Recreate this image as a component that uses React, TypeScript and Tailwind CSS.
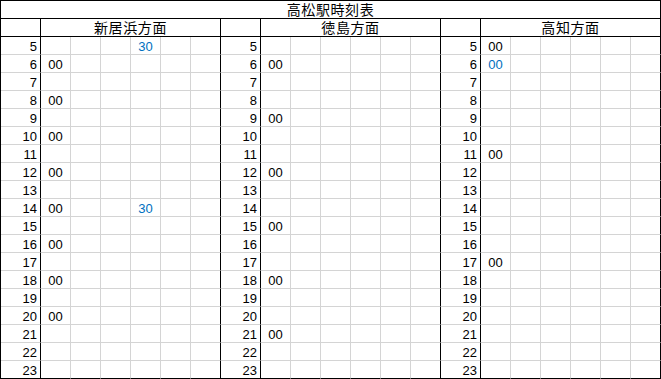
import React from "react";

type Cell = { text: string; blue?: boolean } | null;

interface Section {
    title: string;
    // hour -> six minute slots
    times: Record<number, Cell[]>;
}

const hours = Array.from({ length: 19 }, (_, i) => i + 5);

const oo: Cell = { text: "00" };
const ooBlue: Cell = { text: "00", blue: true };
const thirtyBlue: Cell = { text: "30", blue: true };

const sections: Section[] = [
    {
        title: "新居浜方面",
        times: {
            5: [null, null, null, thirtyBlue],
            6: [oo],
            8: [oo],
            10: [oo],
            12: [oo],
            14: [oo, null, null, thirtyBlue],
            16: [oo],
            18: [oo],
            20: [oo],
        },
    },
    {
        title: "徳島方面",
        times: {
            6: [oo],
            9: [oo],
            12: [oo],
            15: [oo],
            18: [oo],
            21: [oo],
        },
    },
    {
        title: "高知方面",
        times: {
            5: [oo],
            6: [ooBlue],
            11: [oo],
            17: [oo],
        },
    },
];

const font = { fontFamily: '"Liberation Sans", Arial, sans-serif' };
const jpFont = { fontFamily: '"Noto Sans CJK JP", "Liberation Sans", sans-serif' };

const HourCell = ({ hour, last }: { hour: number; last: boolean }) => (
    <div
        className={`h-[18px] border-r border-b border-r-black ${last ? "border-b-black" : "border-b-[#d4d4d4]"} flex items-end justify-end pr-[3px] pb-[1px] text-[13px] leading-[13px] text-black`}
    >
        {hour}
    </div>
);

const MinuteCell = ({ cell, edge, last }: { cell: Cell; edge: boolean; last: boolean }) => (
    <div
        className={`h-[18px] border-r border-b ${edge ? "border-r-black" : "border-r-[#d4d4d4]"} ${last ? "border-b-black" : "border-b-[#d4d4d4]"} flex items-end justify-center pb-[1px] text-[13px] leading-[13px] ${cell?.blue ? "text-[#0070c0]" : "text-black"}`}
    >
        {cell?.text ?? ""}
    </div>
);

export default function App() {
    return (
        <div className="w-[661px] h-[379px] bg-white" style={font}>
            <div className="w-[661px] border-l border-t border-black grid grid-cols-[40px_repeat(6,30px)_40px_repeat(6,30px)_40px_repeat(6,30px)]">
                <div
                    className="col-span-21 h-[18px] border-r border-b border-black flex items-center justify-center text-[14px] leading-[17px] tracking-[0.6px] text-black"
                    style={jpFont}
                >
                    高松駅時刻表
                </div>

                {sections.map((s) => (
                    <React.Fragment key={s.title}>
                        <div className="h-[18px] border-r border-b border-black" />
                        <div
                            className="col-span-6 h-[18px] border-r border-b border-black flex items-center justify-center text-[14px] leading-[17px] tracking-[0.6px] text-black"
                            style={jpFont}
                        >
                            {s.title}
                        </div>
                    </React.Fragment>
                ))}

                {hours.map((h, ri) => {
                    const last = ri === hours.length - 1;
                    return (
                        <React.Fragment key={h}>
                            {sections.map((s) => {
                                const row = s.times[h] ?? [];
                                return (
                                    <React.Fragment key={s.title}>
                                        <HourCell hour={h} last={last} />
                                        {[0, 1, 2, 3, 4, 5].map((i) => (
                                            <MinuteCell key={i} cell={row[i] ?? null} edge={i === 5} last={last} />
                                        ))}
                                    </React.Fragment>
                                );
                            })}
                        </React.Fragment>
                    );
                })}
            </div>
        </div>
    );
}
